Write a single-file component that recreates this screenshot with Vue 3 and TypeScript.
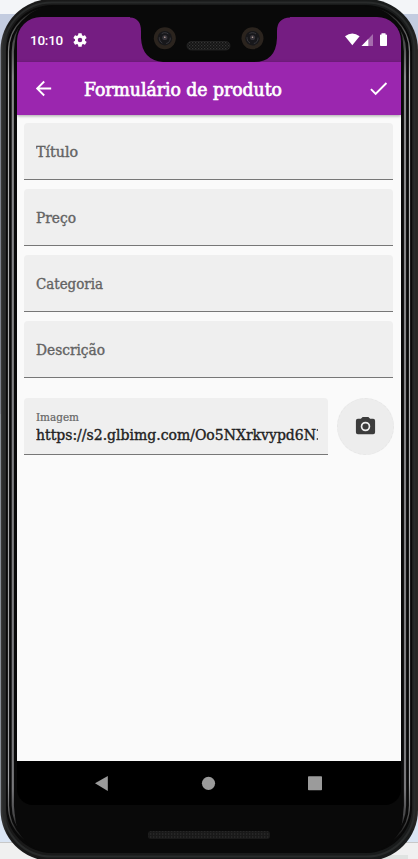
<script setup lang="ts">
import { ref } from 'vue'

interface Field {
  id: string
  label: string
  width: number
}

// width: the measured line length each label is fitted to
const fields: Field[] = [
  { id: 'titulo', label: 'Título', width: 42 },
  { id: 'preco', label: 'Preço', width: 40 },
  { id: 'categoria', label: 'Categoria', width: 67 },
  { id: 'descricao', label: 'Descrição', width: 69 },
]

const image = ref('https://s2.glbimg.com/Oo5NXrkvypd6N')
</script>

<template>
  <div class="stage">
    <svg class="device" width="418" height="859" viewBox="0 0 418 859" aria-hidden="true">
      <defs>
        <linearGradient id="edge" x1="0" x2="1" y1="0" y2="0">
          <stop offset="0" stop-color="#393939" />
          <stop offset=".008" stop-color="#303030" />
          <stop offset=".018" stop-color="#191919" />
          <stop offset=".98" stop-color="#191b1b" />
          <stop offset="1" stop-color="#2b2826" />
        </linearGradient>
        <linearGradient id="shine" x1="0" x2="0" y1="0" y2="1">
          <stop offset="0" stop-color="#151515" />
          <stop offset=".03" stop-color="#606060" />
          <stop offset=".08" stop-color="#b5b5b5" />
          <stop offset=".92" stop-color="#a0a0a2" />
          <stop offset=".96" stop-color="#505050" />
          <stop offset=".99" stop-color="#0a0a0a" />
        </linearGradient>
        <linearGradient id="shine2" x1="0" x2="0" y1="0" y2="1">
          <stop offset="0" stop-color="#101010" />
          <stop offset=".08" stop-color="#88888a" />
          <stop offset=".93" stop-color="#77777a" />
          <stop offset="1" stop-color="#0a0a0a" />
        </linearGradient>
        <pattern id="mesh" width="3" height="3" patternUnits="userSpaceOnUse">
          <rect width="3" height="3" fill="#121212" />
          <rect width="1.3" height="1.3" fill="#363636" />
          <rect x="1.5" y="1.5" width="1.3" height="1.3" fill="#2c2c2c" />
        </pattern>
        <pattern id="mesh2" width="3" height="3" patternUnits="userSpaceOnUse">
          <rect width="3" height="3" fill="#191919" />
          <rect width="1.3" height="2" fill="#262626" />
        </pattern>
      </defs>
      <rect x="0" y="0" width="418" height="859" fill="#f3f5f8" />
      <rect x="0" y="14" width="418" height="400" fill="#c3cce0" />
      <rect x="0" y="414" width="418" height="428" fill="#dae5f4" />
      <rect x="0" y="842" width="418" height="1" fill="#c8c8c8" />
      <rect x="0" y="843" width="418" height="16" fill="#f0f0f0" />
      <rect x="380" y="855" width="28" height="4" fill="#dfe3e1" />
      <rect x="0.500" y="-1" width="417.500" height="862" rx="51" fill="url(#edge)" />
      <rect x="3.500" y="2.500" width="411" height="854" rx="48" fill="none" stroke="#292b2b" stroke-width="2" />
      <rect x="6" y="5" width="406" height="848" rx="46" fill="#090909" />
      <rect x="8.500" y="7.500" width="401" height="842" rx="44" fill="none" stroke="url(#shine)" stroke-width="1.200" />
      <rect x="12.800" y="9.500" width="392.200" height="838" rx="42" fill="none" stroke="url(#shine2)" stroke-width="2.200" />
      <rect x="15" y="6" width="388" height="847" rx="38" fill="#090909" />
      <rect x="60" y="5" width="300" height="12" fill="#090909" />
      <rect x="60" y="838" width="300" height="15" fill="#090909" />
    </svg>

    <main class="screen">
      <header class="status">
        <span class="clock">10:10</span>
        <svg class="gear" width="14" height="14" viewBox="2 2 20 20">
          <path fill="#fff" d="M19.14 12.94c.04-.3.06-.61.06-.94 0-.32-.02-.64-.07-.94l2.03-1.58a.49.49 0 0 0 .12-.61l-1.92-3.32a.49.49 0 0 0-.59-.22l-2.39.96a7 7 0 0 0-1.62-.94l-.36-2.54a.48.48 0 0 0-.48-.41h-3.84a.48.48 0 0 0-.47.41l-.36 2.54a7 7 0 0 0-1.62.94l-2.39-.96a.48.48 0 0 0-.59.22L2.74 8.87a.48.48 0 0 0 .12.61l2.03 1.58a6 6 0 0 0 0 1.88l-2.03 1.58a.49.49 0 0 0-.12.61l1.92 3.32c.12.22.37.29.59.22l2.39-.96c.5.38 1.03.7 1.62.94l.36 2.54c.05.24.24.41.48.41h3.84c.24 0 .44-.17.47-.41l.36-2.54a7 7 0 0 0 1.62-.94l2.39.96c.22.08.47 0 .59-.22l1.92-3.32a.48.48 0 0 0-.12-.61zM12 15.200a3.200 3.200 0 1 1 0-6.400 3.200 3.200 0 0 1 0 6.400z" />
        </svg>
        <svg class="signals" width="44" height="16" viewBox="344 32 44 16">
          <path fill="#fff" d="M345 36.200Q352.300 30.600 359.600 36.200L352.300 45.300Z" />
          <path fill="#fff" fill-opacity=".35" d="M373 34V46H361.500Z" />
          <path fill="#fff" d="M368.300 39V46H361.500Z" />
          <path fill="#fff" d="M381.500 33.300h4v1.100h.7q.8 0 .8.800v10q0 .8-.8.800h-5.400q-.8 0-.8-.800v-10q0-.8.8-.800h.7z" />
        </svg>
      </header>

      <div class="appbar">
        <svg class="back" width="23" height="23" viewBox="0 0 24 24"><path fill="#fff" d="M20 11H7.830l5.590-5.590L12 4l-8 8 8 8 1.410-1.410L7.830 13H20z" /></svg>
        <svg class="heading" width="204" height="28" role="heading"><text x="0" y="21" textLength="198" lengthAdjust="spacingAndGlyphs">Formulário de produto</text></svg>
        <svg class="check" width="23" height="23" viewBox="0 0 24 24"><path fill="#fff" d="M9 16.170 4.830 12l-1.420 1.410L9 19 21 7l-1.410-1.410z" /></svg>
      </div>

      <form class="form" @submit.prevent>
        <label v-for="f in fields" :key="f.id" class="field">
          <svg class="label" width="120" height="24"><text x="0" y="17" :textLength="f.width" lengthAdjust="spacingAndGlyphs">{{ f.label }}</text></svg>
        </label>
        <div class="row">
          <label class="field filled">
            <svg class="caption" width="60" height="15"><text x="0" y="11" textLength="43" lengthAdjust="spacingAndGlyphs">Imagem</text></svg>
            <svg class="value" width="282" height="21"><text x="0" y="15" textLength="280" lengthAdjust="spacingAndGlyphs">{{ image }}</text><path d="M280.800 4h1v2h-1zM280.800 13h1v2h-1z" /></svg>
          </label>
          <button class="camera" type="button">
            <svg width="23" height="23" viewBox="0 0 24 24"><path fill="#3c3c3c" fill-rule="evenodd" d="M9 2 7.170 4H4a2 2 0 0 0-2 2v12a2 2 0 0 0 2 2h16a2 2 0 0 0 2-2V6a2 2 0 0 0-2-2h-3.170L15 2zM12 17a5 5 0 1 1 0-10 5 5 0 0 1 0 10z" /><circle cx="12" cy="12" r="3.200" fill="#3c3c3c" /></svg>
          </button>
        </div>
      </form>

      <nav class="nav">
        <svg width="384" height="44" viewBox="17 761 384 44">
          <path d="M95 783.300 107.800 776v15Z" />
          <circle cx="208.500" cy="783.300" r="6.600" />
          <rect x="308" y="776.300" width="14" height="14" rx=".8" />
        </svg>
      </nav>
    </main>

    <svg class="notch" width="160" height="56" viewBox="130 7 160 56" aria-hidden="true">
      <path fill="#090909" d="M130 7H290V17.500Q277 18 277 31V38Q276 62 254 62H163Q142 60 141 38V31Q141 18 130 17.500Z" />
      <g v-for="x in [164.800, 252.500]" :key="x">
        <circle :cx="x" cy="38.200" r="11" fill="#2b241e" />
        <circle :cx="x" cy="38.200" r="7.300" fill="#17171a" />
        <circle :cx="x" cy="38.200" r="5.500" fill="none" stroke="#38383d" stroke-dasharray="7 4" />
        <circle :cx="x" cy="37.500" r="2.600" fill="#38343a" />
        <circle :cx="x" cy="37.300" r=".8" fill="#c0aaa0" />
      </g>
      <rect x="187" y="41.500" width="43" height="8.500" rx="4.200" fill="url(#mesh)" stroke="#2b2b2b" stroke-width=".6" />
    </svg>
    <svg class="speaker" width="124" height="10" aria-hidden="true"><rect x="1" y="1" width="122" height="8" rx="3" fill="url(#mesh2)" /></svg>
  </div>
</template>

<style>
body {
  margin: 0;
}
</style>

<style scoped>
.stage {
  position: relative;
  width: 418px;
  height: 859px;
  overflow: hidden;
  box-sizing: border-box;
  padding: 17px;
}
.device {
  position: absolute;
  inset: 0;
}
.screen {
  position: relative;
  width: 384px;
  height: 788px;
  display: flex;
  flex-direction: column;
  border-radius: 24px 24px 16px 16px;
  overflow: hidden;
  background: #090909;
}
svg {
  display: block;
  flex: none;
}
.status {
  box-sizing: border-box;
  height: 45px;
  flex: none;
  display: flex;
  align-items: center;
  padding: 1px 13px 0;
  background: #751d82;
}
.clock {
  font: 500 13.500px/20px Roboto, sans-serif;
  letter-spacing: -0.250px;
  color: #fff;
  width: 43px;
}
.signals {
  margin-left: auto;
}
.appbar {
  position: relative;
  z-index: 1;
  height: 52.500px;
  flex: none;
  display: flex;
  align-items: center;
  box-sizing: border-box;
  padding: 1px 11px 0 14.500px;
  background: #9b26af;
  box-shadow: 0 1px 3px rgba(0, 0, 0, 0.35);
}
.heading {
  margin-left: 29.500px;
}
.check {
  margin-left: auto;
}
text {
  font-family: "Roboto Slab", "DejaVu Serif Condensed", "DejaVu Serif", serif;
}
.heading text {
  font-size: 18px;
  fill: #fff;
  stroke: #fff;
  stroke-width: 0.650px;
}
.form {
  flex: 1;
  display: flex;
  flex-direction: column;
  gap: 9.300px;
  padding: 8px 8px 0 7px;
  background: #fafafa;
}
.field {
  box-sizing: border-box;
  height: 57px;
  display: flex;
  flex-direction: column;
  justify-content: center;
  padding: 2px 0 0 11.500px;
  background: #efefef;
  border-bottom: 1px solid #777;
  border-radius: 4px 4px 0 0;
}
.label text {
  font-size: 14.500px;
  fill: #636363;
  stroke: #636363;
  stroke-width: 0.350px;
}
.row {
  display: flex;
  justify-content: space-between;
  margin-top: 10px;
}
.filled {
  width: 304px;
  justify-content: flex-start;
  padding-top: 12px;
}
.caption text {
  font-size: 10.800px;
  fill: #666;
  stroke: #666;
  stroke-width: 0.200px;
}
.value text {
  font-size: 14.500px;
  fill: #222;
  stroke: #222;
  stroke-width: 0.350px;
}
.value path {
  fill: #333;
}
.camera {
  width: 57px;
  height: 57px;
  margin-right: -0.500px;
  border: 1px dashed #e7e7e7;
  border-radius: 50%;
  padding: 0;
  display: flex;
  align-items: center;
  justify-content: center;
  background: #ededed;
}
.nav {
  height: 44px;
  flex: none;
  background: #000;
}
.nav svg {
  fill: #9b9b9b;
}
.notch {
  position: absolute;
  left: 130px;
  top: 7px;
}
.speaker {
  position: absolute;
  left: 147px;
  top: 830px;
}
</style>
